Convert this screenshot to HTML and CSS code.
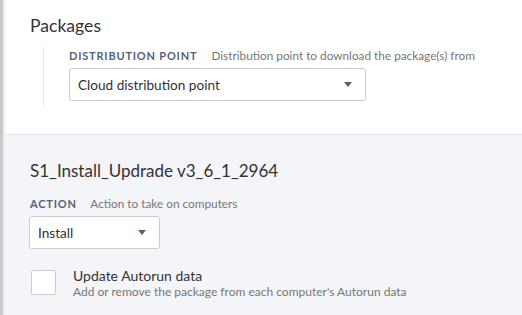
FILE: index.html
```html
<!DOCTYPE html>
<html lang="en">
<head>
    <meta charset="UTF-8">
    <title>Packages</title>
    <link rel="stylesheet" href="styles.css">
</head>
<body>
<div class="page">
    <div class="page-edge"></div>
    <div class="content">
        <div class="section section-top">
            <h2 class="section-title">Packages</h2>
            <div class="field-group">
                <div class="field-label">
                    <span class="label-name">DISTRIBUTION POINT</span>
                    <span class="label-help">Distribution point to download the package(s) from</span>
                </div>
                <div class="select select-wide">
                    <span class="select-value">Cloud distribution point</span>
                    <span class="select-arrow"></span>
                </div>
            </div>
        </div>
        <div class="section section-package">
            <h2 class="section-title">S1_Install_Updrade v3_6_1_2964</h2>
            <div class="field-label">
                <span class="label-name">ACTION</span>
                <span class="label-help">Action to take on computers</span>
            </div>
            <div class="select select-small">
                <span class="select-value">Install</span>
                <span class="select-arrow"></span>
            </div>
            <div class="check-row">
                <span class="checkbox"></span>
                <div class="check-text">
                    <div class="check-title">Update Autorun data</div>
                    <div class="check-help">Add or remove the package from each computer's Autorun data</div>
                </div>
            </div>
        </div>
    </div>
</div>
</body>
</html>
```

FILE: styles.css
```css
html,body{
    margin: 0;
    padding: 0;
    height: 100%;
    font-family: Lato, "Open Sans", Arial, sans-serif;
    color: #333;
}
.page{
    display: flex;
    height: 100%;
}
.page-edge{
    width: 3px;
    background-color: #c9c9c9;
    border-right: 2px solid #ededed;
    flex-shrink: 0;
}
.content{
    flex: 1;
    display: flex;
    flex-direction: column;
}
.section{
    padding: 0 25px;
}
.section-top{
    background-color: #fff;
    padding-top: 15px;
    padding-bottom: 28px;
    border-bottom: 1px solid #e3e5ea;
}
.section-package{
    flex: 1;
    background-color: #f4f5f8;
    padding-top: 25px;
}
.section-title{
    margin: 0;
    font-size: 17px;
    font-weight: normal;
    line-height: 22px;
    color: #333;
}
.section-top .section-title{
    font-size: 17.6px;
}
.field-group{
    margin: 10px 0 0 13px;
    padding: 2px 0 5px 25px;
    border-left: 1px solid #e8e8e8;
}
.field-label{
    height: 14px;
    line-height: 14px;
    font-size: 11.8px;
    white-space: nowrap;
}
.section-package .field-label{
    margin-top: 15px;
}
.label-name{
    font-size: 11px;
    font-weight: bold;
    color: #55617a;
    letter-spacing: 0.8px;
    margin-right: 11px;
}
.label-help{
    color: #777;
}
.select{
    display: flex;
    align-items: center;
    justify-content: space-between;
    box-sizing: border-box;
    height: 33px;
    margin-top: 5px;
    padding: 0 13px 0 8px;
    background-color: #fff;
    border: 1px solid #ccc;
    border-radius: 3px;
    font-size: 13.6px;
    color: #333;
}
.select-wide{
    width: 297px;
}
.select-small{
    width: 131px;
    margin-left: -1px;
}
.select-arrow{
    width: 0;
    height: 0;
    border-left: 4px solid transparent;
    border-right: 4px solid transparent;
    border-top: 5px solid #56617a;
}
.check-row{
    display: flex;
    align-items: flex-start;
    margin-top: 21px;
}
.checkbox{
    box-sizing: border-box;
    width: 25px;
    height: 25px;
    margin: 0 17px 0 1px;
    background-color: #fff;
    border: 1px solid #ccc;
    border-radius: 2px;
    flex-shrink: 0;
}
.check-title{
    font-size: 14px;
    line-height: 16px;
    margin-top: -2px;
}
.check-help{
    font-size: 12px;
    line-height: 15px;
    color: #777;
}
```
